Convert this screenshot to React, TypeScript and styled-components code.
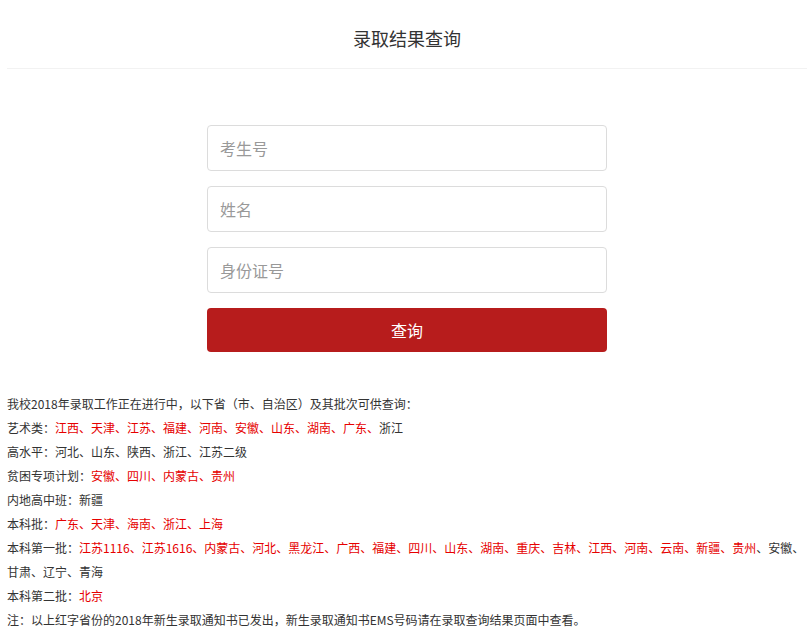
import React from 'react'
import styled, { createGlobalStyle } from 'styled-components'

const GlobalStyle = createGlobalStyle`
  html, body {
    margin: 0;
    padding: 0;
    background: #fff;
  }
  body {
    font-family: "Noto Sans CJK SC", "Noto Sans", sans-serif;
    color: #333;
  }
`

const Page = styled.div`
  padding: 0 2px 0 7px;
`

const Header = styled.header`
  padding: 26px 0 18px;
  border-bottom: 1px solid #f2f2f2;
  text-align: center;
`

const Title = styled.h1`
  margin: 0;
  font-size: 18px;
  line-height: 24px;
  font-weight: 400;
  color: #333;
`

const Form = styled.form`
  width: 400px;
  margin: 56px auto 0;
  display: flex;
  flex-direction: column;
  gap: 15px;
`

const Field = styled.input`
  box-sizing: border-box;
  height: 46px;
  width: 100%;
  padding: 0 12px;
  border: 1px solid #dcdcdc;
  border-radius: 4px;
  font-family: inherit;
  font-size: 16px;
  color: #333;
  outline: none;
  &::placeholder {
    color: #999;
  }
`

const Submit = styled.button`
  height: 44px;
  width: 100%;
  border: none;
  border-radius: 4px;
  background: #b71c1c;
  color: #fff;
  font-family: inherit;
  font-size: 16px;
  cursor: pointer;
`

const Notice = styled.div`
  margin-top: 40px;
  font-size: 12px;
  line-height: 24px;
`

const Line = styled.p`
  margin: 0;
`

const Red = styled.span`
  color: #e60000;
`

type Row = { label: string; red?: string; plain?: string }

const rows: Row[] = [
  { label: '艺术类：', red: '江西、天津、江苏、福建、河南、安徽、山东、湖南、广东、', plain: '浙江' },
  { label: '高水平：', plain: '河北、山东、陕西、浙江、江苏二级' },
  { label: '贫困专项计划：', red: '安徽、四川、内蒙古、贵州' },
  { label: '内地高中班：', plain: '新疆' },
  { label: '本科批：', red: '广东、天津、海南、浙江、上海' },
  {
    label: '本科第一批：',
    red: '江苏1116、江苏1616、内蒙古、河北、黑龙江、广西、福建、四川、山东、湖南、重庆、吉林、江西、河南、云南、新疆、贵州',
    plain: '、安徽、甘肃、辽宁、青海',
  },
  { label: '本科第二批：', red: '北京' },
]

const App = () => {
  return (
    <Page>
      <GlobalStyle />
      <Header>
        <Title>录取结果查询</Title>
      </Header>

      <Form onSubmit={e => e.preventDefault()}>
        <Field placeholder="考生号" />
        <Field placeholder="姓名" />
        <Field placeholder="身份证号" />
        <Submit type="submit">查询</Submit>
      </Form>

      <Notice>
        <Line>我校2018年录取工作正在进行中，以下省（市、自治区）及其批次可供查询：</Line>
        {rows.map(r => (
          <Line key={r.label}>
            {r.label}
            {r.red && <Red>{r.red}</Red>}
            {r.plain}
          </Line>
        ))}
        <Line>注：以上红字省份的2018年新生录取通知书已发出，新生录取通知书EMS号码请在录取查询结果页面中查看。</Line>
      </Notice>
    </Page>
  )
}

export default App
